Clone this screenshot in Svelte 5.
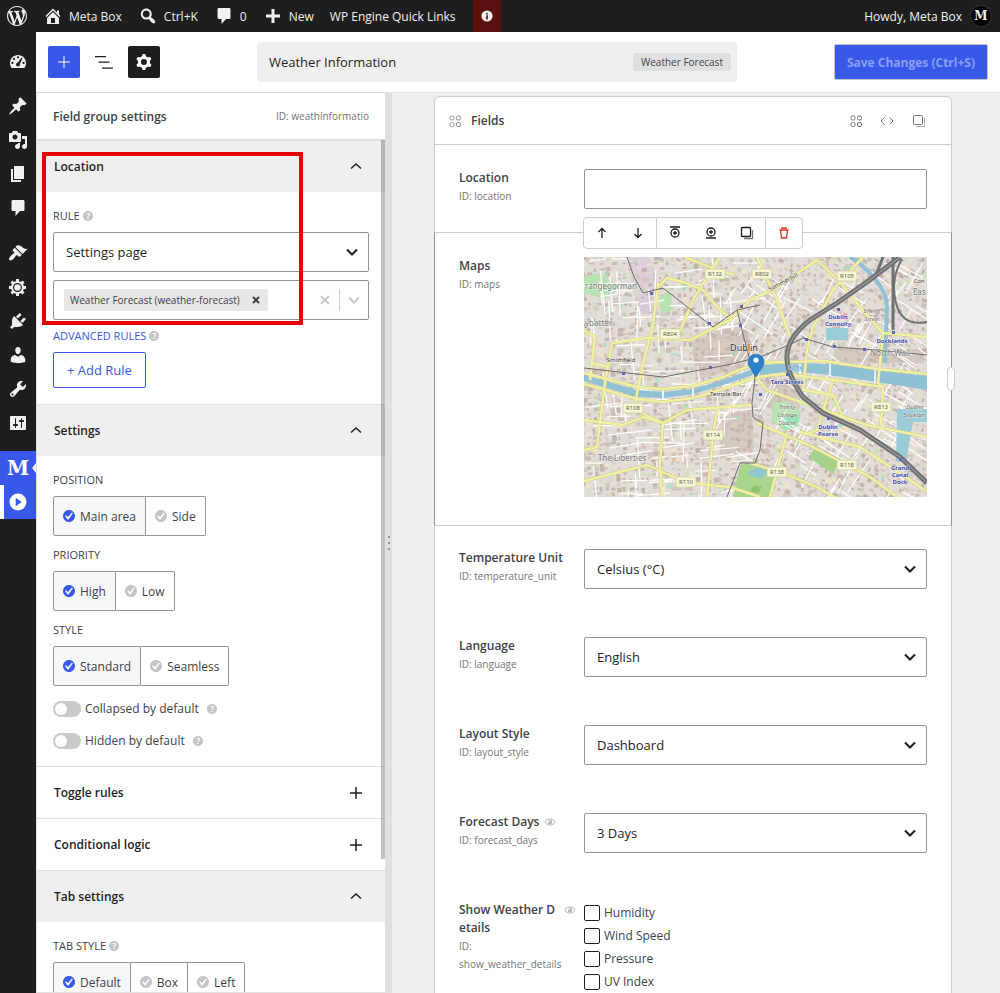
<script>
  const icons = {
    wordpress: "M20 10c0-5.51-4.49-10-10-10C4.48 0 0 4.49 0 10c0 5.52 4.48 10 10 10 5.51 0 10-4.48 10-10zM7.78 15.37L4.37 6.22c.55-.02 1.17-.08 1.17-.08.5-.06.44-1.13-.06-1.11 0 0-1.45.11-2.37.11-.18 0-.37 0-.58-.01C4.12 2.69 6.87 1.11 10 1.11c2.33 0 4.45.87 6.05 2.34-.68-.11-1.65.39-1.65 1.58 0 .74.45 1.36.9 2.1.35.61.55 1.36.55 2.46 0 1.49-1.4 5-1.4 5l-3.03-8.37c.54-.02.82-.17.82-.17.5-.05.44-1.25-.06-1.22 0 0-1.44.12-2.38.12-.87 0-2.33-.12-2.33-.12-.5-.03-.56 1.2-.06 1.22l.92.08 1.26 3.41zM17.41 10c.24-.64.74-1.87.43-4.25.7 1.29 1.05 2.71 1.05 4.25 0 3.29-1.73 6.24-4.4 7.78.97-2.59 1.94-5.2 2.92-7.78zM6.1 18.09C3.12 16.65 1.11 13.53 1.11 10c0-1.3.23-2.48.72-3.59C3.25 10.3 4.67 14.2 6.1 18.09zm4.03-6.63l2.58 6.98c-.86.29-1.76.45-2.71.45-.79 0-1.57-.11-2.29-.33.81-2.38 1.62-4.74 2.42-7.1z",
    home: "M16 8.5l1.53 1.53-1.06 1.06L10 4.6l-6.47 6.49-1.06-1.06L10 2.5l4 4v-2h2v4zm-6-2.46l6 5.99V18H4v-5.97zM12 17v-5H8v5h4z",
    search: "M12.14 4.18c1.87 1.87 2.11 4.75.72 6.89.12.1.22.21.36.31.2.16.47.36.81.59.34.24.56.39.66.47.42.31.73.57.94.78.32.32.6.65.84 1 .25.35.44.69.59 1.04.14.35.21.68.18 1-.02.32-.14.59-.36.81s-.49.34-.81.36c-.31.02-.65-.04-.99-.19-.35-.14-.7-.34-1.04-.59-.35-.24-.68-.52-1-.84-.21-.21-.47-.52-.77-.93-.1-.13-.25-.35-.47-.66-.22-.32-.4-.57-.56-.78-.16-.2-.29-.35-.44-.5-2.07 1.09-4.69.76-6.44-.98-2.14-2.15-2.14-5.64 0-7.78 2.15-2.15 5.63-2.15 7.78 0zm-1.41 6.36c1.36-1.37 1.36-3.58 0-4.95-1.37-1.37-3.59-1.37-4.95 0-1.37 1.37-1.37 3.58 0 4.95 1.36 1.37 3.58 1.37 4.95 0z",
    comment: "M5 2h10c1.1 0 1.5.6 1.5 1.5v8c0 1-.6 1.5-1.5 1.5h-3l-4.5 5v-5H5c-1 0-1.5-.6-1.5-1.5v-8C3.5 2.6 4 2 5 2z",
    plus: "M17 8.5v3h-5.5V17h-3v-5.5H3v-3h5.5V3h3v5.5z",
    info: "M10 2a8 8 0 100 16 8 8 0 000-16zm1.3 4.7a1.3 1.3 0 11-2.6 0 1.3 1.3 0 012.6 0zM11.2 15H8.8V9h2.4z",
    dashboard: "M3.76 17h12.48C17.34 15.63 18 13.89 18 12c0-4.42-3.58-8-8-8s-8 3.58-8 8c0 1.89.66 3.63 1.76 5zM10 5.2a1.1 1.1 0 110 2.2 1.1 1.1 0 010-2.2zM6 6.8A1.1 1.1 0 116 9a1.1 1.1 0 010-2.2zm-1.6 4a1.1 1.1 0 110 2.2 1.1 1.1 0 010-2.2zm11.2 0a1.1 1.1 0 110 2.2 1.1 1.1 0 010-2.2zM13.5 6.5l1 .6-2.600 5.8c.4 1.4-.6 2.5-1.9 2.5s-2.3-1.3-1.8-2.5c.3-.8 1-1.2 1.8-1.3z",
    post: "M10.44 3.02l1.82-1.82 6.36 6.35-1.83 1.82c-1.05-.68-2.48-.57-3.41.36l-.75.75c-.92.93-1.04 2.35-.35 3.41l-1.83 1.82-2.41-2.41-2.8 2.79c-.42.42-3.38 2.71-3.8 2.29s1.86-3.39 2.28-3.81l2.79-2.79L4.1 9.36l1.83-1.82c1.05.69 2.48.57 3.4-.36l.75-.75c.93-.92 1.05-2.35.36-3.41z",
    media: "M13 11V4c0-.55-.45-1-1-1h-1.67L9 1H5L3.67 3H2c-.55 0-1 .45-1 1v7c0 .55.45 1 1 1h10c.55 0 1-.45 1-1zM7 4.5c1.38 0 2.5 1.12 2.5 2.5S8.38 9.5 7 9.5 4.5 8.38 4.5 7 5.62 4.5 7 4.5zM14 6h5v10.5c0 1.38-1.12 2.5-2.5 2.5S14 17.88 14 16.5s1.12-2.5 2.5-2.5c.17 0 .34.02.5.05V9h-3V6zm-4 8.05V13h2v3.5c0 1.38-1.12 2.5-2.5 2.5S7 17.88 7 16.5 8.12 14 9.5 14c.17 0 .34.02.5.05z",
    page: "M6 15V2h10v13H6zm-1 1h8v2H3V5h2v11z",
    appearance: "M14.48 11.06L7.41 3.99l1.5-1.5c.5-.56 2.3-.47 3.51.32 1.21.8 1.43 1.28 2.91 2.1 1.18.64 2.45 1.26 4.45.85zm-.71.71L6.7 4.7 4.93 6.47c-.39.39-.39 1.02 0 1.41l1.06 1.06c.39.39.39 1.03 0 1.42-.6.6-1.43 1.11-2.21 1.69-.35.26-.7.53-1.01.84C1.43 14.23.4 16.08 1.4 17.07c.99 1 2.84-.03 4.18-1.36.31-.31.58-.66.85-1.02.57-.78 1.08-1.61 1.69-2.21.39-.39 1.02-.39 1.41 0l1.06 1.06c.39.39 1.02.39 1.41 0z",
    generic: "M18 12h-2.18c-.17.7-.44 1.35-.81 1.93l1.54 1.54-2.1 2.1-1.54-1.54c-.58.36-1.23.63-1.91.79V19H8v-2.18c-.68-.16-1.33-.43-1.91-.79l-1.54 1.54-2.12-2.12 1.54-1.54c-.36-.58-.63-1.23-.79-1.91H1V9.03h2.17c.16-.7.44-1.35.8-1.94L2.43 5.55l2.1-2.1 1.54 1.54c.58-.37 1.24-.64 1.93-.81V2h3v2.18c.68.16 1.33.43 1.91.79l1.54-1.54 2.12 2.12-1.54 1.54c.36.59.64 1.24.8 1.94H18V12zM9.5 6a4.5 4.5 0 100 9 4.5 4.5 0 000-9zm0 1.2a3.3 3.3 0 110 6.6 3.3 3.3 0 010-6.6z",
    plugins: "M13.11 4.36L9.87 7.6 8 5.73l3.24-3.24c.35-.34 1.05-.2 1.56.32.52.51.66 1.21.31 1.55zm-8 1.77l.91-1.12 9.01 9.01-1.19.84c-.71.71-2.63 1.16-3.82 1.16H6.14L4.9 17.26c-.59.59-1.54.59-2.12 0-.59-.58-.59-1.53 0-2.12l1.24-1.24v-3.88c0-1.13.4-3.19 1.09-3.89zm7.26 3.97l3.24-3.24c.34-.35 1.04-.21 1.55.31.52.51.66 1.21.31 1.55l-3.24 3.25z",
    users: "M10 9.25c-2.27 0-2.73-3.44-2.73-3.44C7 4.02 7.82 2 9.97 2c2.16 0 2.98 2.02 2.71 3.81 0 0-.41 3.44-2.68 3.44zm0 2.57L12.72 10c2.39 0 4.52 2.33 4.52 4.53v2.49s-3.65 1.13-7.24 1.13c-3.65 0-7.24-1.13-7.24-1.13v-2.49c0-2.25 1.94-4.48 4.47-4.48z",
    tools: "M16.68 9.77c-1.34 1.34-3.3 1.67-4.95.99l-5.41 6.52c-.99.99-2.59.99-3.58 0s-.99-2.59 0-3.57l6.52-5.42c-.68-1.65-.35-3.61.99-4.95 1.28-1.28 3.12-1.62 4.72-1.06l-2.89 2.89 2.82 2.82 2.86-2.87c.53 1.58.18 3.39-1.08 4.65zM3.81 16.21c.4.39 1.04.39 1.43 0 .4-.4.4-1.04 0-1.43-.39-.4-1.03-.4-1.43 0-.39.39-.39 1.03 0 1.43z",
    settings: "M18 16V4c0-.55-.45-1-1-1H3c-.55 0-1 .45-1 1v12c0 .55.45 1 1 1h14c.55 0 1-.45 1-1zM8 11h1c.55 0 1 .45 1 1s-.45 1-1 1H8v1.5c0 .28-.22.5-.5.5s-.5-.22-.5-.5V13H6c-.55 0-1-.45-1-1s.45-1 1-1h1V5.5c0-.28.22-.5.5-.5s.5.22.5.5V11zm5-2h-1c-.55 0-1-.45-1-1s.45-1 1-1h1V5.5c0-.28.22-.5.5-.5s.5.22.5.5V7h1c.55 0 1 .45 1 1s-.45 1-1 1h-1v5.5c0 .28-.22.5-.5.5s-.5-.22-.5-.5V9z",
    play: "M10 1.5a8.5 8.5 0 100 17 8.5 8.5 0 000-17zM7.7 5.8l6 4.2-6 4.2z",
    help: "M17 10c0-3.87-3.14-7-7-7-3.87 0-7 3.13-7 7s3.13 7 7 7c3.86 0 7-3.13 7-7zm-6.3 1.48H9.14v-.43c0-.38.08-.7.24-.98s.46-.57.88-.89c.41-.29.68-.53.81-.71.14-.18.2-.39.2-.62 0-.25-.09-.44-.28-.58-.19-.13-.45-.19-.79-.19-.58 0-1.25.19-2 .57l-.64-1.28c.87-.49 1.8-.74 2.77-.74.81 0 1.45.2 1.92.58.48.39.71.91.71 1.55 0 .43-.09.8-.29 1.11-.19.32-.57.67-1.11 1.06-.38.28-.61.49-.71.63-.1.15-.15.34-.15.57v.35zm-1.47 2.74c-.18-.17-.27-.42-.27-.73 0-.33.08-.58.26-.75s.43-.25.77-.25c.32 0 .57.09.75.26s.27.42.27.74c0 .3-.09.55-.27.72-.18.18-.43.27-.75.27-.33 0-.58-.09-.76-.26z",
    yes: "M10 2c-4.42 0-8 3.58-8 8s3.58 8 8 8 8-3.58 8-8-3.58-8-8-8zm-.615 12.66h-1.34l-3.24-4.54 1.341-1.25 2.569 2.4 5.141-5.931 1.34.94-5.811 8.381z",
    eye: "M10 4C5.500 4 2 6.8.5 10 2 13.2 5.5 16 10 16s8-2.8 9.5-6C18 6.8 14.5 4 10 4zm0 1.3c3.6 0 6.4 2 8 4.7-1.6 2.7-4.4 4.7-8 4.700S3.600 12.700 2 10c1.6-2.7 4.4-4.7 8-4.7zM10 6a4 4 0 100 8 4 4 0 000-8zM8.600 7.200a1.400 1.400 0 110 2.800 1.400 1.400 0 010-2.800z"
  };
  const cog = "M10.289 4.836A1 1 0 0111.275 4h1.306a1 1 0 01.987.836l.244 1.466c.787.26 1.503.679 2.108 1.218l1.393-.522a1 1 0 011.216.437l.653 1.13a1 1 0 01-.23 1.273l-1.148.944a6.025 6.025 0 010 2.435l1.149.946a1 1 0 01.23 1.272l-.653 1.13a1 1 0 01-1.216.437l-1.394-.522c-.605.54-1.32.958-2.108 1.218l-.244 1.466a1 1 0 01-.987.836h-1.306a1 1 0 01-.986-.836l-.244-1.466a5.995 5.995 0 01-2.108-1.218l-1.394.522a1 1 0 01-1.217-.436l-.653-1.131a1 1 0 01.23-1.272l1.149-.946a6.026 6.026 0 010-2.435l-1.148-.944a1 1 0 01-.23-1.272l.653-1.131a1 1 0 011.217-.437l1.393.522a5.994 5.994 0 012.108-1.218l.244-1.466zM14.929 12a3 3 0 11-6 0 3 3 0 016 0z";

  const menu = [
    [{ icon: "dashboard", label: "Dashboard" }],
    [
      { icon: "post", label: "Posts" },
      { icon: "media", label: "Media" },
      { icon: "page", label: "Pages" },
      { icon: "comment", label: "Comments" }
    ],
    [
      { icon: "appearance", label: "Appearance" },
      { icon: "generic", label: "Extensions" },
      { icon: "plugins", label: "Plugins" },
      { icon: "users", label: "Users" },
      { icon: "tools", label: "Tools" },
      { icon: "settings", label: "Settings" }
    ]
  ];

  let title = "Weather Information";
  let rule = "Settings page";
  let pages = ["Weather Forecast (weather-forecast)"];
  let open = { location: true, settings: true, toggle: false, logic: false, tab: true };
  let choices = [
    { name: "position", label: "Position", options: ["Main area", "Side"], value: "Main area" },
    { name: "priority", label: "Priority", options: ["High", "Low"], value: "High" },
    { name: "style", label: "Style", options: ["Standard", "Seamless"], value: "Standard" }
  ];
  let tabStyle = "Default";
  let toggles = [
    { label: "Collapsed by default", on: false },
    { label: "Hidden by default", on: false }
  ];
  const selects = [
    { id: "temperature_unit", label: "Temperature Unit", options: ["Celsius (°C)", "Fahrenheit (°F)"] },
    { id: "language", label: "Language", options: ["English"] },
    { id: "layout_style", label: "Layout Style", options: ["Dashboard"] },
    { id: "forecast_days", label: "Forecast Days", options: ["3 Days", "5 Days"], eye: true }
  ];
  const details = ["Humidity", "Wind Speed", "Pressure", "UV Index"];

  function removePage(page) {
    pages = pages.filter((p) => p !== page);
  }

  // small blocks and side streets that fill the map between the main roads
  let seed = 7;
  function rand() {
    seed = (seed * 16807) % 2147483647;
    return seed / 2147483647;
  }
  const blockColors = ["#c9b9ae", "#c5b6ac", "#d3c6bd", "#d6ccc6", "#cbbfba", "#bfb3ac", "#d8d6d2", "#d5dfc0", "#efe3c8", "#d9c3b8"];
  const blocks = [];
  for (let x = -10; x < 350; x += 6) {
    for (let y = -10; y < 245; y += 5) {
      if (rand() < 0.85) {
        blocks.push({
          x: x + rand() * 2,
          y: y + rand() * 2,
          w: 2 + rand() * 4,
          h: 1 + rand() * 4,
          a: (x < 150 ? -10 : 24) + (rand() < 0.15 ? 35 : 0),
          fill: blockColors[Math.floor(rand() * blockColors.length)]
        });
      }
    }
  }
  const streets = [];
  for (let i = 0; i < 260; i++) {
    const x = rand() * 343;
    const y = rand() * 240;
    const a = ((x < 150 ? -10 : 26) + (rand() < 0.5 ? 90 : 0) + rand() * 12) * Math.PI / 180;
    const l = 14 + rand() * 30;
    streets.push(`M${x.toFixed(1)} ${y.toFixed(1)}l${(Math.cos(a) * l).toFixed(1)} ${(Math.sin(a) * l).toFixed(1)}`);
  }
  const greens = [];
  for (let i = 0; i < 40; i++) {
    greens.push({ x: rand() * 340, y: rand() * 236, w: 2 + rand() * 5, h: 2 + rand() * 4 });
  }
  const roads = [
    "M74 26L74 30 68 73 59 106 53 136 51 153 79 166",
    "M74 30L83 21 99 25 119 33 133 50 146 61",
    "M136 0L123 20 109 43 95 77",
    "M28 86L63 81 106 83 146 63 166 43 189 33 233 3",
    "M0 73L11 80 6 123",
    "M28 86L21 126 13 190 0 193",
    "M0 163L39 168 59 160 79 166 103 153 166 148",
    "M79 166L76 206 78 240",
    "M0 224L63 208 103 226 146 230 176 240",
    "M133 153L129 180 123 240",
    "M100 0L136 14 150 18",
    "M173 0L193 43 206 80",
    "M279 0L249 33 229 70 223 93 219 133 249 138 259 160",
    "M233 3L256 25 276 50 299 76 343 80",
    "M299 76L294 126 299 130 297 168",
    "M183 133L239 153 283 168 343 180",
    "M249 123L233 173 220 178",
    "M173 166L229 190 286 220 313 240",
    "M166 206L199 216 233 230 250 240",
    "M203 176L186 240",
    "M216 175L276 190 326 223 343 235",
    "M0 116L53 130 79 132 109 129 139 120 172 106 240 104 293 112 343 117",
    "M0 127L53 142 79 145 109 141 139 132 172 120 200 117 250 123 299 130",
    "M7 106L25 110M172 120L183 133"
  ];
  const shields = [
    ["R132", 131, 17], ["R802", 178, 17], ["R105", 263, 19], ["R804", 86, 77], ["R108", 49, 151],
    ["R114", 129, 178], ["R110", 102, 225], ["R138", 193, 215], ["R118", 263, 208], ["R813", 297, 150]
  ];
  const stations = [
    ["Dublin", 254, 62], ["Connolly", 254, 69], ["Docklands", 308, 86], ["Tara Street", 203, 127],
    ["Dublin", 244, 172], ["Pearse", 244, 179], ["Grand", 316, 213], ["Canal", 316, 220], ["Dock", 316, 227]
  ];
  const stops = [
    [67, 36], [125, 66], [157, 49], [156, 68], [39, 116], [126, 110], [254, 52], [309, 75],
    [203, 117], [244, 161], [316, 202], [250, 89], [280, 92], [176, 137], [222, 82]
  ];
</script>

{#snippet dash(name, size)}
  <svg class="dash" viewBox="0 0 20 20" width={size} height={size} fill-rule="evenodd" aria-hidden="true"><path d={icons[name]} /></svg>
{/snippet}

{#snippet help()}
  <svg class="help" viewBox="3 3 14 14" width="10" height="10" aria-hidden="true"><path d={icons.help} /></svg>
{/snippet}

{#snippet chevron()}
  <svg class="chevron" viewBox="0 0 12 12" width="12" height="12" aria-hidden="true"><path d="M1 3.5l5 5 5-5" /></svg>
{/snippet}

{#snippet grid()}
  <svg class="line" viewBox="0 0 12 12" width="12" height="12" aria-hidden="true">
    <rect x="1" y="1" width="4" height="4" rx="1.5" /><rect x="7.500" y="1" width="4" height="4" rx="1.5" />
    <rect x="1" y="7.500" width="4" height="4" rx="1.5" /><rect x="7.500" y="7.500" width="4" height="4" rx="1.5" />
  </svg>
{/snippet}

{#snippet copy()}
  <svg class="line" viewBox="0 0 14 14" width="14" height="14" aria-hidden="true">
    <rect x="1.5" y="1.5" width="9" height="9" rx="1" /><path class="back" d="M12.500 4v8.500H4" />
  </svg>
{/snippet}

{#snippet heading(key, text)}
  <button class="section-title" class:open={open[key]} aria-expanded={open[key]} on:click={() => (open[key] = !open[key])}>
    <span>{text}</span>
    <svg viewBox="0 0 12 12" width="12" height="12" aria-hidden="true">
      <path d={open[key] ? "M1 7.5l5-4.500 5 4.500" : "M6 0v12M0 6h12"} />
    </svg>
  </button>
{/snippet}

<div class="page">
  <header class="adminbar">
    <a href="#wp" class="wp" aria-label="About WordPress">{@render dash("wordpress", 20)}</a>
    <a href="#site">{@render dash("home", 20)}Meta Box</a>
    <button>{@render dash("search", 20)}Ctrl+K</button>
    <a href="#comments">{@render dash("comment", 20)}0</a>
    <a href="#new">{@render dash("plus", 20)}New</a>
    <a href="#wpe">WP Engine Quick Links</a>
    <a href="#notice" class="notice" aria-label="Notice">{@render dash("info", 14)}</a>
    <a href="#me" class="me">Howdy, Meta Box <span class="avatar">M</span></a>
  </header>

  <div class="shell">
    <nav class="menu" aria-label="Main menu">
      {#each menu as group}
        <ul>
          {#each group as item}
            <li><a href="#{item.icon}" aria-label={item.label}>{@render dash(item.icon, 20)}</a></li>
          {/each}
        </ul>
      {/each}
      <ul class="current">
        <li class="top"><a href="#metabox" class="logo" aria-label="Meta Box">M</a></li>
        <li class="sub"><a href="#builder" aria-label="Builder">{@render dash("play", 20)}</a></li>
      </ul>
    </nav>

    <div class="editor">
      <div class="topbar">
        <div class="tools">
          <button class="tool primary" aria-label="Add field">
            <svg viewBox="0 0 24 24" width="24" height="24"><path d="M11.5 12.5V18h1v-5.5H18v-1h-5.5V6h-1v5.5H6v1z" /></svg>
          </button>
          <button class="tool" aria-label="Structure">
            <svg viewBox="0 0 24 24" width="24" height="24"><path d="M3 6h11v1.200H3zM6.500 11.5h11v1.200h-11zM21 17.500H10v1.200h11z" /></svg>
          </button>
          <button class="tool dark" aria-label="Settings">
            <svg viewBox="0 0 24 24" width="24" height="24" fill-rule="evenodd"><path d={cog} /></svg>
          </button>
        </div>
        <div class="title">
          <input type="text" aria-label="Field group title" bind:value={title} />
          <span class="tag">Weather Forecast</span>
        </div>
        <button class="save">Save Changes (Ctrl+S)</button>
      </div>

      <div class="columns">
        <aside class="panel">
          <div class="panel-head">
            <strong>Field group settings</strong>
            <span>ID: weathinformatio</span>
          </div>
          <div class="scroll">
            <section class="location">
              {@render heading("location", "Location")}
              {#if open.location}
                <div class="body">
                  <label class="caption" for="rule">RULE {@render help()}</label>
                  <div class="select">
                    <select id="rule" bind:value={rule}>
                      <option>Settings page</option>
                      <option>Post type</option>
                    </select>
                    {@render chevron()}
                  </div>
                  <div class="multi">
                    <div class="chips">
                      {#each pages as page}
                        <span class="chip">
                          {page}
                          <button aria-label="Remove {page}" on:click={() => removePage(page)}>
                            <svg viewBox="0 0 8 8" width="8" height="8"><path d="M1 1l6 6M7 1L1 7" /></svg>
                          </button>
                        </span>
                      {/each}
                    </div>
                    <button class="clear" aria-label="Clear" on:click={() => (pages = [])}>
                      <svg viewBox="0 0 10 10" width="10" height="10"><path d="M1 1l8 8M9 1L1 9" /></svg>
                    </button>
                    <button class="drop" aria-label="Show pages">{@render chevron()}</button>
                  </div>
                  <a class="caption advanced" href="#advanced">ADVANCED RULES {@render help()}</a>
                  <button class="add">+ Add Rule</button>
                </div>
              {/if}
              <div class="highlight" aria-hidden="true"></div>
            </section>

            <section>
              {@render heading("settings", "Settings")}
              {#if open.settings}
                <div class="body settings">
                  {#each choices as choice}
                    <fieldset>
                      <legend class="caption">{choice.label.toUpperCase()}</legend>
                      <div class="segments">
                        {#each choice.options as option}
                          <label class:on={choice.value === option}>
                            <input type="radio" name={choice.name} value={option} bind:group={choice.value} />
                            <svg viewBox="2 2 16 16" width="12" height="12" aria-hidden="true"><path d={icons.yes} /></svg>
                            {option}
                          </label>
                        {/each}
                      </div>
                    </fieldset>
                  {/each}
                  <div class="toggles">
                    {#each toggles as toggle}
                      <label class="toggle">
                        <input type="checkbox" bind:checked={toggle.on} />
                        {toggle.label}
                        {@render help()}
                      </label>
                    {/each}
                  </div>
                </div>
              {/if}
            </section>

            <section>{@render heading("toggle", "Toggle rules")}</section>
            <section>{@render heading("logic", "Conditional logic")}</section>

            <section>
              {@render heading("tab", "Tab settings")}
              {#if open.tab}
                <div class="body settings">
                  <fieldset>
                    <legend class="caption">TAB STYLE {@render help()}</legend>
                    <div class="segments">
                      {#each ["Default", "Box", "Left"] as option}
                        <label class:on={tabStyle === option}>
                          <input type="radio" name="tab-style" value={option} bind:group={tabStyle} />
                          <svg viewBox="2 2 16 16" width="12" height="12" aria-hidden="true"><path d={icons.yes} /></svg>
                          {option}
                        </label>
                      {/each}
                    </div>
                  </fieldset>
                </div>
              {/if}
            </section>
          </div>
          <div class="thumb"></div>
        </aside>
        <div class="splitter"><i></i><i></i><i></i></div>

        <main>
          <div class="card">
            <div class="card-head">
              {@render grid()}
              <h2>Fields</h2>
              <button aria-label="Layout">{@render grid()}</button>
              <button aria-label="Code">
                <svg class="line" viewBox="0 0 14 12" width="14" height="12"><path d="M4.5 2.500L1 6l3.500 3.500M9.500 2.500L13 6l-3.500 3.500" /></svg>
              </button>
              <button aria-label="Duplicate">{@render copy()}</button>
            </div>

            <div class="field">
              <div class="label">
                <label for="location">Location</label>
                <small>ID: location</small>
              </div>
              <input id="location" class="text" type="text" />
            </div>

            <div class="field active">
              <div class="label">
                <strong>Maps</strong>
                <small>ID: maps</small>
              </div>
              <svg class="map" viewBox="0 0 343 240" preserveAspectRatio="xMidYMid slice" role="img" aria-label="Map of Dublin">
                <rect width="343" height="240" fill="#e2ddd8" />
                <path d="M43 0h22l9 26-6 28-14-3-4-14z" fill="#ddd0dc" />
                <path d="M309 40l6 20 12 14-16 4z" fill="#e6d9e6" />
                {#each blocks as b}
                  <rect x={b.x} y={b.y} width={b.w} height={b.h} fill={b.fill} transform="rotate({b.a} {b.x} {b.y})" />
                {/each}
                <path d="M108 85l52-22 14 44-62 16zM250 92h90v14h-90zM180 124l36-2v30h-30zM138 160l30-8 2 40-34 10z" fill="#c6b2a6" opacity=".45" />
                <g fill="#a8dfbb">
                  {#each greens as g}
                    <rect x={g.x} y={g.y} width={g.w} height={g.h} rx="1" opacity=".75" />
                  {/each}
                </g>
                <path d="M0 20l14-4 14 8 10 6-18 12-20-6zM75 38l12-2 2 16-12 6z" fill="#b7e3b3" />
                <path d="M54 40l12 2-2 16-10-6z" fill="#d9c9dd" />
                <path d="M189 146l14-2 14 10-2 14-14 6-14-10z" fill="#b9e3b4" />
                <path d="M198 158h18l-4 12-12 2z" fill="#8fe0b4" />
                <path class="street" d={streets.join("")} />
                <path d="M156 208l14-4 24 12-9 24h-36z" fill="#a9d48b" />
                <path d="M162 216l12-6 10 5-8 7z" fill="#8fc7cf" />
                <path d="M170 228l8 2-4 6-8-2z" fill="#8cc46e" />
                <path d="M224 200l8-10 24 12-7 15z" fill="#a6d18d" />
                <path d="M266 0C282 10 303 30 303 50L301 106" class="water" stroke-width="4" />
                <path d="M0 118l53 15 26 2 30-3 30-9 30-11v6l-30 10-30 9-30 4-26-1L0 124z" fill="#8fc0d4" />
                <path d="M176 108l40-2 30 1 47 6 50 6v14l-50-8-47-7-40-4-30 4z" fill="#8fc0d4" />
                <path d="M242 71h22v12h-22zM313 152h30v13h-14l-7 40-10-1z" fill="#9ccbd8" />
                <path d="M79 133v10M109 129v12M246 106v13M291 112v14M216 105v12" stroke="#fff" stroke-width="1.500" />
                {#each roads as d}
                  <path class="road-edge" {d} />
                {/each}
                {#each roads as d}
                  <path class="road" {d} />
                {/each}
                <path class="tram" d="M43 0L50 20 59 36 79 31 129 70 153 53 176 48" />
                <path class="tram" d="M0 111L79 120 143 108 176 100 205 88 219 81 249 90 293 93 343 98" />
                <path class="tram" d="M153 53L163 93 171 120 168 146 169 160 179 166 176 193 171 206 156 206 143 240" />
                <g class="rail">
                  <path d="M316 0L283 25 253 46 226 63Q204 80 203 98T219 140L239 156 276 173 316 200 343 226" stroke-width="5" />
                  <path d="M299 0L292 18 253 46M309 0V73" stroke-width="3" />
                  <path d="M318 2Q306 22 312 46T343 65" stroke-width="2" />
                </g>
                <path class="rail-mid" d="M316 0L283 25 253 46 226 63Q204 80 203 98T219 140L239 156 276 173 316 200 343 226" />
                <g fill="#5668c0">
                  {#each stops as [x, y]}
                    <rect x={x - 1} y={y - 1} width="3" height="3" />
                  {/each}
                </g>
                {#each shields as [name, x, y]}
                  <rect x={x - 10} y={y - 5} width="20" height="10" rx="1" fill="#f6f6cf" stroke="#c8c79a" stroke-width=".6" />
                  <text {x} y={y + 2} class="shield">{name}</text>
                {/each}
                <g class="area">
                  <text x="1" y="32">rangegorman</text>
                  <text x="1" y="69">ybatter</text>
                  <text x="14" y="204">The Liberties</text>
                  <text x="286" y="99">North Wall</text>
                  <text x="329" y="38">Eas</text>
                </g>
                <g class="town">
                  <text x="37" y="105">Smithfield</text>
                  <text x="142" y="139">Temple Bar</text>
                  <text x="160" y="94" class="city">Dublin</text>
                  <text x="335" y="26">Con</text>
                  <text x="200" y="27" transform="rotate(-28 200 27)">Summerhill</text>
                </g>
                <g class="station">
                  {#each stations as [name, x, y]}
                    <text {x} {y}>{name}</text>
                  {/each}
                </g>
                <g class="place">
                  <text x="288" y="56">Sheriff</text><text x="288" y="64">Street</text>
                  <text x="203" y="152">Trinity</text><text x="203" y="160">College</text><text x="203" y="168">Dublin</text>
                  <text x="331" y="152">Dublin</text><text x="330" y="160">Docklan</text>
                  <text x="211" y="112" class="river">Liffey</text>
                </g>
                <path d="M172 120l-7-11a8 8 0 1114 0z" fill="#2a81cb" stroke="#2268a8" stroke-width=".6" />
                <circle cx="172" cy="103" r="2.6" fill="#fff" />
              </svg>

              <div class="toolbar">
                <button aria-label="Move up"><svg viewBox="0 0 14 14" width="14" height="14"><path d="M7 12V2.500M3.500 6L7 2.500 10.500 6" /></svg></button>
                <button aria-label="Move down"><svg viewBox="0 0 14 14" width="14" height="14"><path d="M7 2v9.500M3.500 8L7 11.500 10.500 8" /></svg></button>
                <span></span>
                <button aria-label="Add before"><svg viewBox="0 0 14 14" width="14" height="14"><path d="M2 1h10M7 5v4M5 7h4" /><circle cx="7" cy="7" r="4" /></svg></button>
                <button aria-label="Add after"><svg viewBox="0 0 14 14" width="14" height="14"><path d="M2 12h10M7 4v4M5 6h4" /><circle cx="7" cy="6" r="4" /></svg></button>
                <button aria-label="Duplicate field">{@render copy()}</button>
                <span></span>
                <button class="trash" aria-label="Delete"><svg viewBox="0 0 14 14" width="14" height="14"><path d="M2.500 4h9M5 4V2h4v2M3.500 4l1 8h5l1-8" /></svg></button>
              </div>
              <div class="grip"></div>
            </div>

            {#each selects as field}
              <div class="field">
                <div class="label">
                  <label for={field.id}><span>{field.label}</span>{#if field.eye}{@render dash("eye", 12)}{/if}</label>
                  <small>ID: {field.id}</small>
                </div>
                <div class="select">
                  <select id={field.id}>
                    {#each field.options as option}
                      <option>{option}</option>
                    {/each}
                  </select>
                  {@render chevron()}
                </div>
              </div>
            {/each}

            <div class="field">
              <div class="label">
                <strong id="details"><span>Show Weather Details</span>{@render dash("eye", 12)}</strong>
                <small>ID: show_weather_details</small>
              </div>
              <div class="checks" role="group" aria-labelledby="details">
                {#each details as detail}
                  <label><input type="checkbox" />{detail}</label>
                {/each}
              </div>
            </div>
          </div>
        </main>
      </div>
    </div>
  </div>
</div>

<style>
  :global(body) {
    margin: 0;
  }
  .page,
  .page * {
    box-sizing: border-box;
  }
  .page {
    height: 100vh;
    display: flex;
    flex-direction: column;
    overflow: hidden;
    background: #efefef;
    color: #3c434a;
    font-family: "Open Sans", "Noto Sans", sans-serif;
    font-size: 12px;
  }
  button,
  input,
  select {
    font: inherit;
    color: inherit;
  }
  button {
    border: 0;
    padding: 0;
    background: none;
    cursor: pointer;
  }
  svg {
    display: block;
    flex: none;
  }
  .dash {
    fill: currentColor;
  }
  .line,
  .chevron {
    fill: none;
    stroke: currentColor;
  }
  .chevron {
    stroke-width: 2;
  }
  .back {
    opacity: 0.6;
  }
  .help {
    fill: #c3c4c7;
  }

  .adminbar {
    flex: none;
    height: 32px;
    display: flex;
    align-items: stretch;
    background: #1e1e1e;
    color: #f0f0f1;
  }
  .adminbar a,
  .adminbar button {
    display: flex;
    align-items: center;
    gap: 6px;
    padding: 0 8px;
    color: inherit;
    text-decoration: none;
    white-space: nowrap;
  }
  .adminbar a.wp {
    padding: 0 8px 0 7px;
  }
  .adminbar a.notice {
    margin-left: 9px;
    padding: 0 7px;
    background: #5b1010;
  }
  .adminbar a.me {
    gap: 8px;
    margin-left: auto;
  }
  .avatar {
    width: 22px;
    height: 22px;
    border: 1px solid #333;
    border-radius: 50%;
    background: #000;
    font: bold 12px/20px "DejaVu Serif", serif;
    text-align: center;
  }

  .shell {
    flex: 1;
    min-height: 0;
    display: flex;
  }
  .menu {
    flex: none;
    width: 36px;
    padding-top: 12px;
    background: #1e1e1e;
    color: #f0f0f1;
  }
  .menu ul {
    margin: 0 0 11px;
    padding: 0;
    list-style: none;
  }
  .menu a {
    height: 34px;
    display: flex;
    align-items: center;
    justify-content: center;
    color: inherit;
    text-decoration: none;
  }
  .current {
    background: #3858e9;
    color: #fff;
  }
  .menu .logo {
    height: 34px;
    font: bold 20px/30px "DejaVu Serif", serif;
  }
  .top {
    position: relative;
  }
  .top::after {
    content: "";
    position: absolute;
    right: 0;
    top: 12px;
    border: 5px solid transparent;
    border-left: 0;
    border-right: 4px solid #efefef;
  }
  .sub {
    border-left: 4px solid #fff;
    padding-right: 4px;
  }

  .editor {
    flex: 1;
    min-width: 0;
    display: flex;
    flex-direction: column;
  }
  .topbar {
    flex: none;
    height: 61px;
    display: flex;
    align-items: center;
    justify-content: space-between;
    gap: 12px;
    padding: 0 12px;
    border-bottom: 1px solid #e0e0e0;
    background: #fff;
  }
  .tools {
    display: flex;
    gap: 8px;
  }
  .tool {
    width: 32px;
    height: 32px;
    display: grid;
    place-items: center;
    border-radius: 2px;
    fill: #1e1e1e;
  }
  .primary {
    background: #3858e9;
    fill: #fff;
  }
  .dark {
    background: #1e1e1e;
    fill: #fff;
  }
  .title {
    flex: 0 1 480px;
    height: 40px;
    display: flex;
    align-items: center;
    padding: 0 6px 0 12px;
    border-radius: 4px;
    background: #efefef;
    color: #1e1e1e;
  }
  .title input {
    flex: 1;
    min-width: 0;
    border: 0;
    padding: 0;
    background: none;
    font-size: 13px;
  }
  .tag {
    padding: 0 8px;
    border-radius: 2px;
    background: #e0e0e0;
    color: #3c434a;
    font-size: 10px;
    line-height: 18px;
  }
  .save {
    height: 36px;
    padding: 0 12px;
    border: 1px solid #c3c4c7;
    border-radius: 2px;
    background: #3858e9;
    color: #8c9ef3;
    font-weight: 700;
    white-space: nowrap;
  }

  .columns {
    flex: 1;
    min-height: 0;
    display: flex;
  }
  .panel {
    flex: none;
    width: 349px;
    display: flex;
    flex-direction: column;
    position: relative;
    border-left: 1px solid #e0e0e0;
    border-bottom: 1px solid #e0e0e0;
    background: #fff;
  }
  .panel-head {
    flex: none;
    height: 47px;
    display: flex;
    align-items: center;
    justify-content: space-between;
    padding: 0 16px;
    border-bottom: 1px solid #e0e0e0;
  }
  .panel-head strong {
    font-weight: 600;
  }
  .panel-head span {
    color: #757575;
    font-size: 10px;
  }
  .scroll {
    flex: 1;
    min-height: 0;
    overflow-y: auto;
    scrollbar-width: none;
  }
  .thumb {
    position: absolute;
    top: 47px;
    right: 0;
    width: 4px;
    height: 80%;
    background: rgba(0, 0, 0, 0.24);
    pointer-events: none;
  }
  .location {
    position: relative;
  }
  .highlight {
    position: absolute;
    top: 12px;
    left: 5px;
    width: 261px;
    height: 173px;
    border: 4px solid #e60000;
    pointer-events: none;
  }
  .section-title {
    width: 100%;
    height: 52px;
    display: flex;
    align-items: center;
    justify-content: space-between;
    padding: 0 23px 0 17px;
    border-top: 1px solid #e0e0e0;
    color: #1e1e1e;
    font-weight: 600;
  }
  .section-title.open {
    background: #efefef;
  }
  .section-title svg {
    fill: none;
    stroke: #1e1e1e;
    stroke-width: 1.5;
  }
  .body {
    display: flex;
    flex-direction: column;
    align-items: flex-start;
    gap: 8px;
    padding: 16px;
  }
  .body.settings {
    gap: 11px;
    padding-bottom: 17px;
  }
  .caption {
    display: flex;
    align-items: center;
    gap: 3px;
    padding: 0;
    font-size: 11px;
    line-height: 16px;
  }
  .advanced {
    color: #3858e9;
    text-decoration: none;
  }
  .select {
    position: relative;
    width: 100%;
  }
  select {
    width: 100%;
    height: 40px;
    padding: 0 32px 0 12px;
    border: 1px solid #949494;
    border-radius: 2px;
    background: #fff;
    color: #1e1e1e;
    font-size: 13px;
    appearance: none;
  }
  .select .chevron {
    position: absolute;
    right: 11px;
    top: 14px;
    color: #1e1e1e;
    pointer-events: none;
  }
  .multi {
    width: 100%;
    height: 40px;
    display: flex;
    align-items: center;
    border: 1px solid #949494;
    border-radius: 2px;
    background: #fff;
  }
  .chips {
    flex: 1;
    display: flex;
    gap: 4px;
    padding-left: 10px;
  }
  .chip {
    height: 22px;
    display: flex;
    align-items: center;
    gap: 12px;
    padding: 0 8px 0 6px;
    border-radius: 2px;
    background: #e6e6e6;
    font-size: 10px;
    white-space: nowrap;
  }
  .chip svg,
  .clear svg {
    fill: none;
    stroke: currentColor;
    stroke-width: 2;
  }
  .clear,
  .drop {
    height: 22px;
    color: #c9c9c9;
  }
  .clear {
    padding: 0 9px;
  }
  .drop {
    padding: 0 8px;
    border-left: 1px solid #ccc;
  }
  .add {
    height: 36px;
    padding: 0 13px;
    border: 1px solid #3858e9;
    border-radius: 2px;
    background: #fff;
    color: #3858e9;
    font-size: 13px;
    font-weight: 500;
  }
  fieldset {
    margin: 0;
    padding: 0;
    border: 0;
  }
  legend {
    margin-bottom: 8px;
  }
  .segments {
    display: flex;
  }
  .segments label {
    height: 40px;
    display: flex;
    align-items: center;
    gap: 5px;
    padding: 0 9px;
    border: 1px solid #949494;
    cursor: pointer;
  }
  .segments label + label {
    border-left: 0;
  }
  .segments label:first-child {
    border-radius: 2px 0 0 2px;
  }
  .segments label:last-child {
    border-radius: 0 2px 2px 0;
  }
  .segments input {
    position: absolute;
    opacity: 0;
  }
  .segments svg {
    fill: #c3c4c7;
  }
  .segments .on {
    background: #f6f7f9;
  }
  .segments .on svg {
    fill: #3858e9;
  }
  .toggles {
    display: flex;
    flex-direction: column;
    gap: 16px;
    padding-top: 4px;
  }
  .toggle {
    display: flex;
    align-items: center;
    gap: 4px;
    line-height: 16px;
  }
  .toggle .help {
    margin-left: 4px;
  }
  .toggle input {
    appearance: none;
    width: 28px;
    height: 16px;
    margin: 0;
    padding: 2px;
    border-radius: 8px;
    background: #c9c9c9;
  }
  .toggle input::before {
    content: "";
    display: block;
    width: 12px;
    height: 12px;
    border-radius: 50%;
    background: #fff;
  }
  .toggle input:checked {
    padding-left: 14px;
    background: #3858e9;
  }

  .splitter {
    flex: none;
    width: 7px;
    display: flex;
    flex-direction: column;
    align-items: center;
    justify-content: center;
    gap: 4px;
    background: #e0e0e0;
  }
  .splitter i {
    width: 2px;
    height: 2px;
    background: #949494;
  }

  main {
    flex: 1;
    min-width: 0;
    padding: 3px 48px 0 42px;
    overflow-y: auto;
    scrollbar-width: none;
  }
  .card {
    border: 1px solid #c9ccd1;
    border-radius: 6px 6px 0 0;
    background: #fff;
  }
  .card-head {
    height: 48px;
    display: flex;
    align-items: center;
    gap: 18px;
    padding: 0 25px 0 14px;
    border-bottom: 1px solid #c9ccd1;
    color: #8c8f94;
  }
  h2 {
    flex: 1;
    margin: 0 0 0 -8px;
    color: #3c434a;
    font-size: 12px;
    font-weight: 600;
  }
  .card-head button {
    color: #6c7075;
  }
  .field {
    min-height: 88px;
    display: grid;
    grid-template-columns: 117px minmax(0, 1fr);
    gap: 8px;
    padding: 24px;
  }
  .active {
    position: relative;
    margin: -1px;
    padding: 24px 24px 28px;
    border: 1px solid #949494;
    border-top-color: #c9ccd1;
    border-bottom-color: #c9ccd1;
  }
  .label label,
  .label strong {
    display: flex;
    align-items: flex-start;
    gap: 5px;
    font-weight: 600;
    line-height: 18px;
    word-break: break-all;
  }
  .label .dash {
    margin-top: 3px;
    color: #b4b6ba;
  }
  .label small {
    display: block;
    color: #757575;
    font-size: 10px;
    line-height: 18px;
  }
  .text {
    width: 100%;
    height: 40px;
    padding: 0 12px;
    border: 1px solid #949494;
    border-radius: 2px;
    background: #fff;
  }
  .toolbar {
    position: absolute;
    top: -16px;
    left: 148px;
    height: 32px;
    display: flex;
    border: 1px solid #c9ccd1;
    border-radius: 4px;
    background: #fff;
    color: #1e1e1e;
  }
  .toolbar button {
    width: 36px;
    display: grid;
    place-items: center;
  }
  .toolbar span {
    width: 1px;
    background: #c9ccd1;
  }
  .toolbar svg {
    fill: none;
    stroke: currentColor;
    stroke-width: 1.3;
  }
  .toolbar .trash {
    color: #d63c22;
  }
  .grip {
    position: absolute;
    top: calc(50% - 12px);
    right: -4px;
    width: 8px;
    height: 24px;
    border: 1px solid #c9ccd1;
    border-radius: 4px;
    background: #fff;
  }
  .checks {
    display: flex;
    flex-direction: column;
    align-items: flex-start;
  }
  .checks label {
    display: flex;
    align-items: center;
    gap: 4px;
    line-height: 23px;
  }
  .checks input {
    appearance: none;
    width: 16px;
    height: 16px;
    margin: 0;
    border: 1px solid #1e1e1e;
    border-radius: 2px;
    background: #fff;
  }
  .checks input:checked {
    background: #3858e9;
  }

  .map {
    width: 100%;
    height: 240px;
    fill: none;
  }
  .street {
    stroke: #fff;
    stroke-width: 1.2;
  }
  .water {
    stroke: #8fc0d4;
  }
  .road-edge {
    stroke: #c9c77f;
    stroke-width: 3.2;
    stroke-linejoin: round;
  }
  .road {
    stroke: #f0f1a4;
    stroke-width: 2.4;
    stroke-linejoin: round;
  }
  .tram {
    stroke: #6b6b6e;
    stroke-width: 1;
  }
  .rail {
    stroke: #707273;
  }
  .rail-mid {
    stroke: #a9a9a9;
    stroke-width: 1;
  }
  .map text {
    font-family: "Noto Sans", sans-serif;
    paint-order: stroke;
    stroke: rgba(255, 255, 255, 0.6);
    stroke-width: 1;
  }
  .map .shield,
  .town text,
  .station text,
  .place text {
    text-anchor: middle;
  }
  .map .shield {
    fill: #55552a;
    font-size: 6px;
  }
  .area text {
    fill: #777;
    font-size: 8px;
  }
  .town text {
    fill: #333;
    font-size: 6px;
  }
  .town .city {
    font-size: 9px;
  }
  .station text {
    fill: #3d4db3;
    font-size: 6px;
    font-weight: bold;
  }
  .place text {
    fill: #6b6258;
    font-size: 6px;
    font-style: italic;
  }
  .place .river {
    fill: #4b86b5;
  }
</style>
